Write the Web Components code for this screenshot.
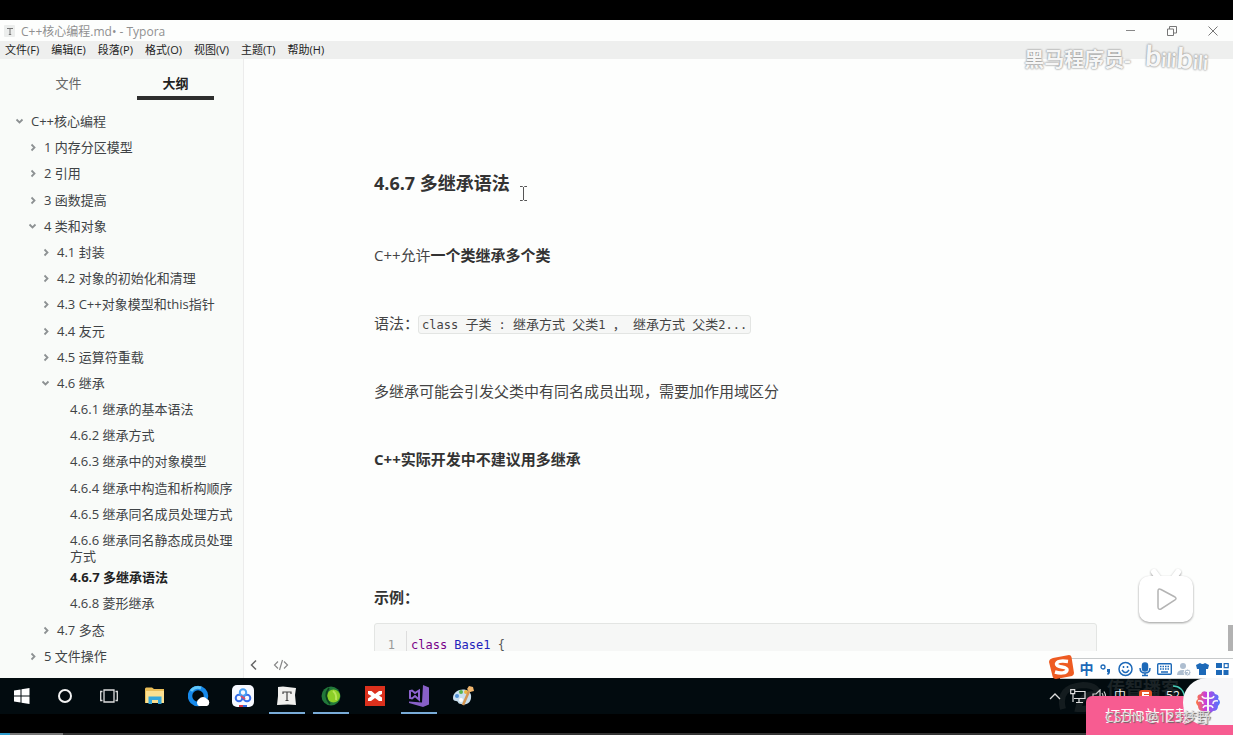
<!DOCTYPE html>
<html lang="zh-CN">
<head>
<meta charset="utf-8">
<title>C++核心编程.md - Typora</title>
<style>
  html, body { margin: 0; background: #000; }
  body { font-family: "Open Sans", "Noto Sans CJK SC", sans-serif; color: #333; }
</style>
</head>
<body>
<desktop-screen></desktop-screen>
<script>
function define(name, html, setup) {
  const template = document.createElement('template');
  template.innerHTML = '<style>:host,*{box-sizing:border-box}button{font:inherit;color:inherit;background:none;border:0;padding:0;margin:0}svg{display:block}</style>' + html;
  customElements.define(name, class extends HTMLElement {
    constructor() {
      super();
      this.attachShadow({ mode: 'open' }).append(template.content.cloneNode(true));
    }
    connectedCallback() { if (setup) setup(this, this.shadowRoot); }
  });
}

define('title-bar', `
<style>
  :host { display: flex; align-items: center; height: 21px; background: #fdfefd; color: #909090; font-size: 12px; }
  .doc { margin: 0 5px 0 4px; }
  .name { flex: 1; }
  .controls { display: flex; }
  .controls button { width: 41px; height: 20px; display: grid; place-items: center; }
</style>
<svg class="doc" width="12" height="12" viewBox="0 0 12 12"><rect width="11" height="12" rx="1" fill="#eceeed"/><path d="M3 3.5h6M6 3.5v6M4.8 9.5h2.4" stroke="#777" fill="none"/></svg>
<span class="name">C++核心编程.md• - Typora</span>
<div class="controls">
  <button aria-label="最小化"><svg width="10" height="10"><path d="M0 4.500h9" stroke="#888"/></svg></button>
  <button aria-label="还原"><svg width="10" height="10" fill="none" stroke="#777"><path d="M.5 3h6v6.500h-6zM2.500 3V.500h7v6.500h-3"/></svg></button>
  <button aria-label="关闭"><svg width="10" height="10"><path d="M.5.5l9 9M9.500.5l-9 9" stroke="#777"/></svg></button>
</div>`);

define('menu-bar', `
<style>
  :host { display: flex; gap: 12px; align-items: center; height: 18px; padding-left: 5px; background: #eeefee; color: #222; font-size: 11px; }
  button { line-height: 18px; white-space: nowrap; }
</style>
<button>文件(F)</button><button>编辑(E)</button><button>段落(P)</button><button>格式(O)</button><button>视图(V)</button><button>主题(T)</button><button>帮助(H)</button>`);

define('outline-item', `
<style>
  :host { display: block; --level: 0; }
  a { display: flex; gap: 6px; min-height: 26px; padding: 5px 10px 0 calc(15px + 13px * var(--level)); color: #3f4346; text-decoration: none; font-size: 13px; line-height: 16px; }
  svg { flex: none; width: 10px; height: 16px; visibility: hidden; fill: none; stroke: #8d9193; stroke-width: 1.8; }
  :host([state]) svg { visibility: visible; }
  :host([state="open"]) svg { transform: rotate(90deg); }
  :host([current]) a { font-weight: 700; color: #222; }
</style>
<a href="#"><svg viewBox="0 0 10 16"><path d="M3.500 5.500l3 3-3 3"/></svg><span><slot></slot></span></a>`,
(el) => el.style.setProperty('--level', el.getAttribute('level')));

define('outline-panel', `
<style>
  :host { display: flex; flex-direction: column; width: 244px; background: #f9fbf9; border-right: 1px solid #ececec; }
  .tabs { display: flex; height: 49px; padding: 0 14px 0 15px; font-size: 13px; color: #666; }
  .tabs button { flex: 1; height: 41px; padding-bottom: 6px; padding-top: 12px; line-height: 22px; position: relative; }
  .tabs [aria-selected=true] { color: #222; font-weight: 700; }
  .tabs [aria-selected=true]::after { content: ""; position: absolute; left: 15px; right: 15px; bottom: 0; height: 4px; background: #2e2e2e; }
  nav { flex: 1; display: flex; flex-direction: column; justify-content: space-between; padding-bottom: 9px; }
</style>
<div class="tabs" role="tablist"><button role="tab">文件</button><button role="tab" aria-selected="true">大纲</button></div>
<nav>
  <outline-item level="0" state="open">C++核心编程</outline-item>
  <outline-item level="1" state="closed">1 内存分区模型</outline-item>
  <outline-item level="1" state="closed">2 引用</outline-item>
  <outline-item level="1" state="closed">3 函数提高</outline-item>
  <outline-item level="1" state="open">4 类和对象</outline-item>
  <outline-item level="2" state="closed">4.1 封装</outline-item>
  <outline-item level="2" state="closed">4.2 对象的初始化和清理</outline-item>
  <outline-item level="2" state="closed">4.3 C++对象模型和this指针</outline-item>
  <outline-item level="2" state="closed">4.4 友元</outline-item>
  <outline-item level="2" state="closed">4.5 运算符重载</outline-item>
  <outline-item level="2" state="open">4.6 继承</outline-item>
  <outline-item level="3">4.6.1 继承的基本语法</outline-item>
  <outline-item level="3">4.6.2 继承方式</outline-item>
  <outline-item level="3">4.6.3 继承中的对象模型</outline-item>
  <outline-item level="3">4.6.4 继承中构造和析构顺序</outline-item>
  <outline-item level="3">4.6.5 继承同名成员处理方式</outline-item>
  <outline-item level="3">4.6.6 继承同名静态成员处理方式</outline-item>
  <outline-item level="3" current>4.6.7 多继承语法</outline-item>
  <outline-item level="3">4.6.8 菱形继承</outline-item>
  <outline-item level="2" state="closed">4.7 多态</outline-item>
  <outline-item level="1" state="closed">5 文件操作</outline-item>
</nav>`);

define('code-block', `
<style>
  :host { display: flex; height: 60px; padding: 7px 0 0 12px; border: 1px solid #e3e5e3; border-radius: 3px; background: #f6f7f6; font: 12px/28px "DejaVu Sans Mono", "Noto Sans CJK SC", monospace; }
  .no { width: 20px; padding-right: 11px; text-align: right; color: #999; border-right: 1px solid #ddd; }
  code { font: inherit; padding-left: 4px; color: #555; }
  .k { color: #708; } .t { color: #22b; }
</style>
<span class="no">1</span><code><span class="k">class</span> <span class="t">Base1</span> {</code>`);

define('doc-view', `
<style>
  :host { display: flex; flex-direction: column; flex: 1; min-width: 0; background: #fdfefd; }
  .scroll { flex: 1 1 0; min-height: 0; overflow: hidden; display: flex; align-items: stretch; }
  .area { flex: 1; padding: 110px 20px 0; }
  article { max-width: 723px; margin: 0 auto; font-size: 15px; line-height: 24px; color: #444; }
  h4 { position: relative; width: fit-content; margin: 0 0 46px; font-size: 18px; line-height: 28px; color: #333; }
  h4 svg { position: absolute; left: calc(100% + 9px); top: 16px; }
  p { margin: 0 0 44px; }
  strong { color: #333; }
  .example { margin: 114px 0 14px; }
  .inline { display: inline-block; height: 19px; padding: 0 3px; margin-left: -1px; vertical-align: middle; border: 1px solid #e3e5e3; border-radius: 3px; background: #f6f7f6; font: 12px/17px "DejaVu Sans Mono", "Noto Sans CJK SC", monospace; white-space: pre; }
  .inline i { font-style: normal; font-size: 13px; }
  .track { width: 6px; display: flex; align-items: flex-end; }
  .track div { width: 5px; height: 26px; margin-left: 1px; background: #b2b2b2; }
  footer { display: flex; gap: 14px; height: 27px; align-items: center; padding-left: 5px; }
</style>
<div class="scroll">
  <div class="area"><article>
    <h4>4.6.7 多继承语法<svg width="9" height="17" fill="none" stroke="#555"><path d="M1 1.500h2.500l1 1 1-1H8M4.500 2v13M1 15.500h2.500l1-1 1 1H8"/></svg></h4>
    <p>C++允许<strong>一个类继承多个类</strong></p>
    <p>语法：<code class="inline">class <i>子类</i> : <i>继承方式</i> <i>父类</i>1 <i>，</i> <i>继承方式</i> <i>父类</i>2...</code></p>
    <p>多继承可能会引发父类中有同名成员出现，需要加作用域区分</p>
    <p><strong>C++实际开发中不建议用多继承</strong></p>
    <p class="example"><strong>示例：</strong></p>
    <code-block></code-block>
  </article></div>
  <div class="track"><div></div></div>
</div>
<footer>
  <button aria-label="收起侧栏"><svg width="10" height="12" fill="none" stroke="#666" stroke-width="1.500"><path d="M7 1.500L2.500 6 7 10.500"/></svg></button>
  <button aria-label="源代码模式"><svg width="16" height="12" fill="none" stroke="#888" stroke-width="1.200"><path d="M5 2.500L1.500 6 5 9.500M11 2.500L14.500 6 11 9.500M9.500 1l-3 10"/></svg></button>
</footer>`);

define('task-bar', `
<style>
  :host { display: flex; height: 36px; background: #020b0f; color: #eee; }
  .apps { display: flex; margin-left: 1px; }
  .sys { display: flex; }
  button { width: 44px; height: 36px; display: grid; place-items: center; position: relative; }
  .on::after { content: ""; position: absolute; left: 4px; right: 4px; bottom: 0; height: 2px; background: #79acd8; }
  .tray { position: relative; margin-left: auto; display: flex; align-items: center; gap: 6px; width: 186px; }
  .tray span { font-size: 12px; line-height: 14px; }
  .tray b { position: absolute; left: 60px; top: -2px; font-size: 18px; line-height: 24px; color: #1b2326; }
  .tray .swirl { position: absolute; left: 12px; top: 2px; }
  .tray > :not(b):not(.swirl) { position: relative; }
</style>
<div class="sys">
  <button aria-label="开始"><svg width="16" height="16" fill="#fff"><path d="M0 2.500l6.500-1v6H0zM7.500 1.300L15.500 0v7.500h-8zM0 8.500h6.500v6L0 13.500zM7.500 8.500h8V16l-8-1.300z"/></svg></button>
  <button aria-label="搜索"><svg width="16" height="16"><circle cx="7" cy="8" r="6" fill="none" stroke="#f2f2f2" stroke-width="2"/></svg></button>
  <button aria-label="任务视图"><svg width="20" height="14" fill="none" stroke="#ddd" stroke-width="1.300"><path d="M4 1h10v12H4zM2.500 2.500H.7v9h1.800M15.500 2.500h1.800v9h-1.800"/></svg></button>
</div>
<div class="apps">
  <button aria-label="文件资源管理器"><svg width="20" height="18"><path d="M0 2q0-2 2-1.500h5L9 2h10v14H0z" fill="#e9bd58"/><path d="M1 4h18v12H1z" fill="#fbe091"/><path d="M3.500 17V9.500h13V17H13v-4H7v4z" fill="#35a7dc"/></svg></button>
  <button aria-label="QQ浏览器"><svg width="22" height="22"><circle cx="10" cy="11" r="8" fill="none" stroke="#1689ea" stroke-width="4.500"/><path d="M3 6a8.500 8.500 0 0 1 10-3" stroke="#62c8fa" stroke-width="3" fill="none"/><path d="M11 21a4 4 0 0 1 0-7 5 5 0 0 1 8 0 3.800 3.800 0 0 1 0 7z" fill="#fff"/></svg></button>
  <button aria-label="百度网盘"><svg width="22" height="22" fill="none" stroke-width="2"><rect width="22" height="22" rx="5" fill="#f7f9ff"/><circle cx="7" cy="13" r="3.300" stroke="#356de8"/><circle cx="15" cy="13" r="3.300" stroke="#356de8"/><circle cx="11" cy="7.500" r="3.200" stroke="#49a0f4"/><path d="M9 11l4 3" stroke="#d74c69"/><path d="M7 21h4" stroke="#d34" /><path d="M11 21h4" stroke="#36d"/></svg></button>
  <button class="on" aria-label="Typora"><svg width="20" height="20"><path d="M1 1l5-.500L19 2l-1 7 1 10-8-.5L0 19l1-9z" fill="#f0f0ee"/><path d="M6 8V6h8v2M10 6v8M8.500 14.500h3" stroke="#444" stroke-width="1.200" fill="none"/></svg></button>
  <button class="on" aria-label="Camtasia"><svg width="20" height="20"><circle cx="10" cy="10" r="9.500" fill="#22783a"/><circle cx="12.500" cy="10" r="6.500" fill="#8ccf28"/><path d="M8 2Q2 10 9 18" fill="none" stroke="#0c3f1e" stroke-width="1.800"/><path d="M12 5q4 3 3 9" fill="none" stroke="#b8e65a" stroke-width="2"/></svg></button>
  <button aria-label="XMind"><svg width="20" height="20"><path d="M0 0h20v20H0z" fill="#dc311d"/><path d="M3 5h3.500l3.500 3 4-3h3v3l-3 1.500 3 2V15h-3l-4-3-4 3H3v-2.500L6.500 10 3 8z" fill="#fff"/></svg></button>
  <button class="on" aria-label="Visual Studio"><svg width="23" height="22"><path d="M15 0l6 2.500v17L15 22 1 18v-1.500l13 1z" fill="#8860c7"/><path d="M2 6v7l2 .5L7 11l4 3.500v-9L7 8 4 5.500z" fill="none" stroke="#8d63d0" stroke-width="2"/></svg></button>
  <button aria-label="画图"><svg width="23" height="22"><path d="M1 13C1 4 16 1 19 10c1 7-4 11-10 9-4 0-2-3-5-3-2 0-3-1-3-3z" fill="#c9dfee"/><circle cx="5" cy="11" r="2" fill="#4f92d5"/><circle cx="9" cy="7" r="2" fill="#58b452"/><circle cx="14" cy="7" r="2" fill="#ebb63e"/><circle cx="9" cy="15" r="2" fill="#fff"/><path d="M11 20l7-16" stroke="#d49550" stroke-width="2.500"/><path d="M15 4l2-3 4 1 1 4-4 1z" fill="#f0b56d"/></svg></button>
</div>
<div class="tray">
  <b>传智播客</b>
  <svg class="swirl" width="44" height="34" fill="none" stroke="#141c1f" stroke-width="6"><path d="M4 29Q-2 7 24 5q17 0 15 13-3 12-20 11Q22 14 36 14"/></svg>
  <svg width="20" height="10" fill="none" stroke="#ddd" stroke-width="1.300" style="margin-left:2px"><path d="M1 8l5-5 5 5"/></svg>
  <svg width="16" height="14" fill="none" stroke="#ddd" stroke-width="1.200" style="margin-left:-5px"><path d="M5 2.500h10v7H4M9 10v3M6 13.500h7M.7.7h4v4h-4zM3 5v8"/></svg>
  <svg width="16" height="14" fill="none" stroke="#ccc" stroke-width="1.200"><path d="M1 5h3l4-4v12L4 9H1zM10 4q2 3 0 6M12 2.500q3 4.500 0 9"/></svg>
  <span>中</span>
  <svg width="13" height="13" style="margin-left:7px"><rect width="13" height="13" rx="3" fill="#e65525"/><path d="M10 3H4v3h5v3H3" stroke="#fff" stroke-width="2" fill="none"/></svg>
  <span style="margin-left:8px">52</span>
</div>`);

define('ime-bar', `
<style>
  :host { display: flex; align-items: center; width: 184px; height: 24px; }
  .logo { position: relative; z-index: 1; }
  .strip { flex: 1; display: flex; align-items: center; justify-content: space-between; height: 21px; margin: 3px 0 0 -14px; padding: 0 2px 0 18px; background: #fff; border: 1px solid #c7cacb; border-right: 0; color: #1d69b8; }
  button { height: 18px; min-width: 15px; font-size: 14px; font-weight: 700; line-height: 18px; }
</style>
<svg class="logo" width="25" height="24"><path d="M4 3L20 0q2 0 2.500 2L25 18q0 2-2 3L7 24q-3 0-3.500-3L0 7q0-3 4-4z" fill="#ee5b22"/><path d="M19 6.500Q8 5 7.500 9c0 4 11 2 10.500 6-.5 3.500-7 3.500-12 2" fill="none" stroke="#fff" stroke-width="3.500"/></svg>
<div class="strip">
  <button>中</button>
  <button aria-label="标点"><svg width="13" height="16"><circle cx="4" cy="6" r="2" fill="none" stroke="#1d69b8" stroke-width="1.300"/><path d="M8 8h3v3q0 2-2 3l-1-1 1-2H8z" fill="#1d69b8"/></svg></button>
  <button aria-label="表情"><svg width="15" height="18" fill="none" stroke="#1d69b8" stroke-width="1.500"><circle cx="7.500" cy="9" r="6.500"/><path d="M4 10q3.500 5 7 0M5.500 6v2M9.500 6v2"/></svg></button>
  <button aria-label="语音"><svg width="14" height="18" fill="none" stroke="#1d69b8" stroke-width="1.500"><rect x="4.500" y="3" width="5" height="8" rx="2.500" fill="#1d69b8"/><path d="M2 8q0 5 5 5t5-5M7 13v3M4 15.500h6"/></svg></button>
  <button aria-label="键盘"><svg width="15" height="18"><rect x=".7" y="3.700" width="13.600" height="10.600" rx="1" fill="none" stroke="#1d69b8" stroke-width="1.400"/><path d="M3 6.500h9M3 9h9" stroke="#1d69b8" stroke-width="1.500" stroke-dasharray="1.500 1"/><path d="M4 12h7" stroke="#1d69b8" stroke-width="1.500"/></svg></button>
  <button aria-label="账户"><svg width="14" height="18" fill="#aebed0"><circle cx="6" cy="6" r="3"/><path d="M0 15q0-5 6-5 5 0 6 5z"/><circle cx="10.500" cy="12.500" r="3.500" stroke="#fff"/><path d="M9 11.500h3l-1.500 3" fill="none" stroke="#fff"/></svg></button>
  <button aria-label="皮肤"><svg width="13" height="18" fill="#1d69b8"><path d="M4 3q2.500 2 5 0l4 2-1 4H10v6H3V9H1L0 5z"/></svg></button>
  <button aria-label="工具箱"><svg width="13" height="18" fill="#1d69b8"><path d="M0 3h6v5H0zM0 10h6v5H0zM7.500 10h5v5h-5z"/><path d="M8.200 3.700h4v4h-4z" fill="none" stroke="#1d69b8" stroke-width="1.200"/></svg></button>
</div>`);

define('video-mark', `
<style>
  :host { display: flex; align-items: center; gap: 14px; width: max-content; height: 34px; color: #f6f6f6; text-shadow: 0 0 2px #888, 0 0 2px #aaa; font-weight: 700; font-size: 20px; }
  .brand { display: flex; align-items: baseline; font-family: Lato, sans-serif; font-size: 20px; line-height: 30px; font-weight: 700; transform: rotate(4deg); }
  .brand span { font-size: 29px; }
</style>
<div>黑马程序员-</div><div class="brand"><span>b</span>ili<span>b</span>ili</div>`);

define('tv-button', `
<button aria-label="播放"><svg width="64" height="62" style="filter:drop-shadow(0 1px 1px #999)"><path d="M19 6l6 8M43 6l-6 8" stroke="#fff" stroke-width="6" stroke-linecap="round"/><rect x="4" y="10" width="54" height="46" rx="10" fill="#fff"/><path d="M23 25q0-3 3-1.500L40 31q2 1.500 0 3l-14 9q-3 1-3-2z" fill="#fff" stroke="#b4b4b4" stroke-width="1.500"/></svg></button>
<style>:host { display: block; }</style>`);

define('app-prompt', `
<style>
  :host { display: block; width: 147px; height: 57px; }
  .cta { position: absolute; left: 0; right: 0; bottom: 0; height: 39px; border-radius: 6px 0 0 0; background: #f75c91; color: #fff; font-size: 15px; line-height: 39px; text-align: left; padding-left: 19px; }
  .mark { position: absolute; left: 19px; bottom: 7px; font-size: 14px; line-height: 22px; color: #ddd; text-shadow: 1px 1px 1px #666; white-space: nowrap; z-index: 2; }
  .brain { position: absolute; right: 0; top: 0; width: 50px; height: 47px; border-radius: 24px 0 0 22px; background: #f7f7f9; display: grid; place-items: center; }
  .ring { position: absolute; left: 82px; top: 6px; }
</style>
<button class="cta">打开B站下载</button>
<svg class="ring" width="22" height="16" fill="none"><path d="M5 2q10 0 12 12" stroke="#46c8b4" stroke-width="1.500"/></svg>
<button class="brain" aria-label="助手"><svg width="26" height="24" fill="none"><defs><linearGradient id="g"><stop stop-color="#ff7a3d"/><stop offset=".4" stop-color="#c83ddd"/><stop offset="1" stop-color="#4b78ff"/></linearGradient></defs><path d="M12 2Q7 0 6 4 1 5 3 9q-4 3 0 7 0 5 5 5 2 3 4 1zM14 2q5-2 6 2 5 1 3 5 4 3 0 7 0 5-5 5-2 3-4 1z" fill="url(#g)"/><path d="M12 8Q8 9 7 6M3 11q5-1 5 3M12 16q-3-1-4 2M14 8q4 1 5-2M23 11q-5-1-5 3M14 16q3-1 4 2" stroke="#f7f7f9" stroke-width="1.500"/></svg></button>
<div class="mark">CSDN @123梦野</div>`);

define('desktop-screen', `
<style>
  :host { position: relative; display: flex; flex-direction: column; min-height: 100vh; padding-top: 20px; background: #000; overflow: hidden; }
  main { flex: 1; display: flex; }
  .progress { height: 21px; display: flex; align-items: flex-end; }
  .progress div { width: 100%; height: 2px; background: linear-gradient(90deg, #2d9bcc 10px, #777 10px 63px, #343434 63px); }
  video-mark { position: absolute; right: 25px; top: 41px; }
  tv-button { position: absolute; right: 34px; bottom: 102px; }
  ime-bar { position: absolute; right: 0; bottom: 56px; }
  app-prompt { position: absolute; right: 0; bottom: 0; }
</style>
<title-bar></title-bar>
<menu-bar></menu-bar>
<main><outline-panel></outline-panel><doc-view></doc-view></main>
<task-bar></task-bar>
<div class="progress"><div></div></div>
<video-mark></video-mark>
<tv-button></tv-button>
<ime-bar></ime-bar>
<app-prompt></app-prompt>`);
</script>
</body>
</html>
